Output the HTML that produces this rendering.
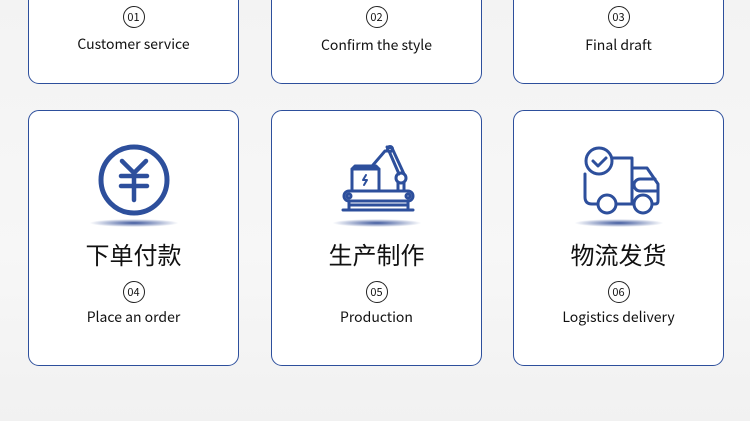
<!DOCTYPE html>
<html><head><meta charset="utf-8"><style>
body{margin:0;width:750px;height:421px;overflow:hidden;background:linear-gradient(#f3f3f3,#f7f7f7 60%,#f1f1f1);font-family:"Noto Sans CJK SC","Liberation Sans",sans-serif;position:relative}
.c{position:absolute;width:211px;background:#fff;border:1px solid #2d4f9c;border-radius:11px;box-sizing:border-box}
.n{position:absolute;left:50%;margin-left:-11px;width:20px;height:20px;border:1px solid #222;border-radius:50%;font-size:11px;line-height:20px;text-align:center;color:#111}
.t{position:absolute;left:0;right:0;text-align:center;font-size:14px;color:#111;line-height:20px}
.h{position:absolute;left:0;right:0;top:126px;text-align:center;font-size:24px;color:#111;line-height:34px}
.s{position:absolute;left:50%;margin-left:-45px;top:108px;width:90px;height:8px;border-radius:50%;background:radial-gradient(ellipse at center,rgba(30,60,140,.85),rgba(30,60,140,0) 70%)}
svg{position:absolute;left:50%;margin-left:-40px;top:28px;overflow:visible}
</style></head><body>
<div class="c" style="left:28px;top:-30px;height:114px"><div class="n" style="top:35px">01</div><div class="t" style="top:63px">Customer service</div></div>
<div class="c" style="left:271px;top:-30px;height:114px"><div class="n" style="top:35px">02</div><div class="t" style="top:64px">Confirm the style</div></div>
<div class="c" style="left:513px;top:-30px;height:114px"><div class="n" style="top:35px">03</div><div class="t" style="top:64px">Final draft</div></div>

<div class="c" style="left:28px;top:110px;height:256px">
<svg width="80" height="80" viewBox="0 0 80 80" fill="none" stroke="#2d4f9c" stroke-width="5" stroke-linecap="round"><circle cx="40" cy="41" r="33"/><path d="M28 22l12 12 12-12M40 34v27M27 37h26M27 47h26" stroke-width="4.5"/></svg>
<div class="s"></div><div class="h">下单付款</div><div class="n" style="top:170px">04</div><div class="t" style="top:196px">Place an order</div></div>

<div class="c" style="left:271px;top:110px;height:256px">
<svg width="80" height="80" viewBox="0 0 80 80" fill="none" stroke="#2d4f9c" stroke-width="3" stroke-linejoin="round" stroke-linecap="round"><rect x="7" y="52" width="69" height="10" rx="5"/><circle cx="12" cy="57" r="2"/><circle cx="71" cy="57" r="2"/><path d="M12 62v9M71 62v9M12 66h59M6 71h70"/><path d="M15 52V30h27v22M15 30l3-3h21l3 3"/><path d="M29 36l-3 5h4l-3 5" stroke-width="2"/><path d="M62 35L52 12l-4 0-12 14M67 35L55 9l-5-1M36 26l-2 3"/><circle cx="53" cy="10" r="2.5"/><circle cx="64" cy="39" r="5"/><path d="M61 44v8M67 44v8"/></svg>
<div class="s"></div><div class="h">生产制作</div><div class="n" style="top:170px">05</div><div class="t" style="top:196px">Production</div></div>

<div class="c" style="left:513px;top:110px;height:256px">
<svg width="80" height="80" viewBox="0 0 80 80" fill="none" stroke="#2d4f9c" stroke-width="3" stroke-linejoin="round" stroke-linecap="round"><path d="M33 19h20v46M6 35v23q0 7 7 7h6M37 65h18M73 65h3q3 0 3-3V45L68 29H53"/><path d="M79 52H61a6 6 0 010-12h15"/><circle cx="28" cy="65" r="9"/><circle cx="64" cy="65" r="9"/><circle cx="20" cy="22" r="13"/><path d="M14 22l5 5 8-8"/></svg>
<div class="s"></div><div class="h">物流发货</div><div class="n" style="top:170px">06</div><div class="t" style="top:196px">Logistics delivery</div></div>
</body></html>
